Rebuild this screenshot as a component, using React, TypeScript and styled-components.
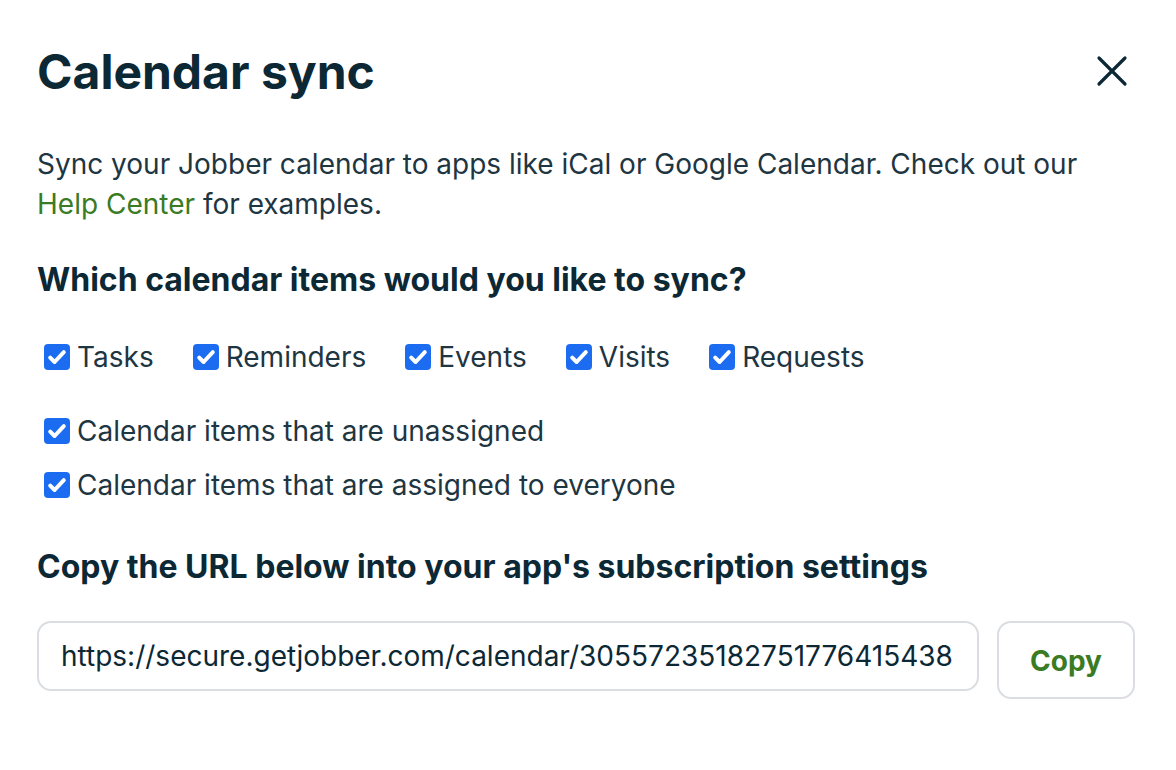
import React from 'react';
import styled, { createGlobalStyle } from 'styled-components';

const GlobalStyle = createGlobalStyle`
  html, body {
    margin: 0;
    padding: 0;
    background: #ffffff;
  }
  body {
    font-family: Inter, "Noto Sans", sans-serif;
    color: #0c2835;
  }
`;

const Dialog = styled.section`
  width: 1176px;
  height: 770px;
  box-sizing: border-box;
  padding: 38px 41px 0 37px;
  background: #fff;
`;

const Header = styled.header`
  display: flex;
  align-items: center;
  justify-content: space-between;
  height: 66px;
`;

const Title = styled.h1`
  margin: 0;
  font-size: 48px;
  font-weight: 700;
  color: #0c2835;
`;

const CloseButton = styled.button`
  border: none;
  background: none;
  padding: 0;
  margin-right: 5px;
  width: 36px;
  height: 36px;
  display: flex;
  align-items: center;
  justify-content: center;
  color: #0c2835;
  cursor: pointer;
`;

const Intro = styled.p`
  margin: 40px 0 0 0;
  font-size: 28px;
  line-height: 40px;
  color: #1e3542;
`;

const Link = styled.a`
  color: #3a7b23;
  text-decoration: none;
`;

const SectionTitle = styled.h2<{ $top: number }>`
  margin: ${(p) => p.$top}px 0 0 0;
  font-size: 32px;
  line-height: 40px;
  font-weight: 700;
  color: #0c2835;
`;

const CheckRow = styled.div`
  display: flex;
  align-items: center;
  gap: 39px;
  margin-top: 37px;
  padding-left: 7px;
`;

const CheckStack = styled.div`
  display: flex;
  flex-direction: column;
  gap: 14px;
  margin-top: 34px;
  padding-left: 7px;
`;

const CheckLabel = styled.label`
  display: flex;
  align-items: center;
  gap: 7px;
  height: 40px;
  font-size: 28px;
  color: #1e3542;
  cursor: pointer;
`;

const Box = styled.span`
  width: 26px;
  height: 26px;
  border-radius: 4px;
  background: #1c6cf2;
  display: flex;
  align-items: center;
  justify-content: center;
  flex-shrink: 0;
`;

const UrlRow = styled.div`
  display: flex;
  align-items: flex-start;
  gap: 18px;
  margin-top: 34px;
`;

const UrlField = styled.input`
  flex: 1;
  min-width: 0;
  height: 70px;
  box-sizing: border-box;
  border: 2px solid #dadee2;
  border-radius: 14px;
  padding: 0 22px;
  font-family: Inter, "Noto Sans", sans-serif;
  font-size: 28px;
  color: #0c2835;
  outline: none;
  background: #fff;
`;

const CopyButton = styled.button`
  width: 138px;
  height: 78px;
  flex-shrink: 0;
  box-sizing: border-box;
  border: 2px solid #dadee2;
  border-radius: 14px;
  background: #fff;
  padding-top: 3px;
  font-family: Inter, "Noto Sans", sans-serif;
  font-size: 28px;
  font-weight: 700;
  color: #3a7b23;
  cursor: pointer;
`;

const Check = () => (
  <Box>
    <svg width="26" height="26" viewBox="0 0 26 26" fill="none">
      <path d="M6.2 13.6 L10.6 18 L19.8 8.2" stroke="#fff" strokeWidth="4" strokeLinecap="round" strokeLinejoin="round" />
    </svg>
  </Box>
);

const Item: React.FC<{ label: string }> = ({ label }) => (
  <CheckLabel>
    <Check />
    {label}
  </CheckLabel>
);

const types = ['Tasks', 'Reminders', 'Events', 'Visits', 'Requests'];

export default function App() {
  return (
    <>
      <GlobalStyle />
      <Dialog>
        <Header>
          <Title>Calendar sync</Title>
          <CloseButton aria-label="Close">
            <svg width="32" height="32" viewBox="0 0 32 32" fill="none">
              <path d="M3 3 L29 29 M29 3 L3 29" stroke="#0c2835" strokeWidth="3.2" strokeLinecap="round" />
            </svg>
          </CloseButton>
        </Header>
        <Intro>
          Sync your Jobber calendar to apps like iCal or Google Calendar. Check out our{' '}
          <Link href="#">Help Center</Link> for examples.
        </Intro>
        <SectionTitle $top={36}>Which calendar items would you like to sync?</SectionTitle>
        <CheckRow>
          {types.map((t) => (
            <Item key={t} label={t} />
          ))}
        </CheckRow>
        <CheckStack>
          <Item label="Calendar items that are unassigned" />
          <Item label="Calendar items that are assigned to everyone" />
        </CheckStack>
        <SectionTitle $top={42}>Copy the URL below into your app's subscription settings</SectionTitle>
        <UrlRow>
          <UrlField readOnly value="https://secure.getjobber.com/calendar/30557235182751776415438" />
          <CopyButton>Copy</CopyButton>
        </UrlRow>
      </Dialog>
    </>
  );
}
